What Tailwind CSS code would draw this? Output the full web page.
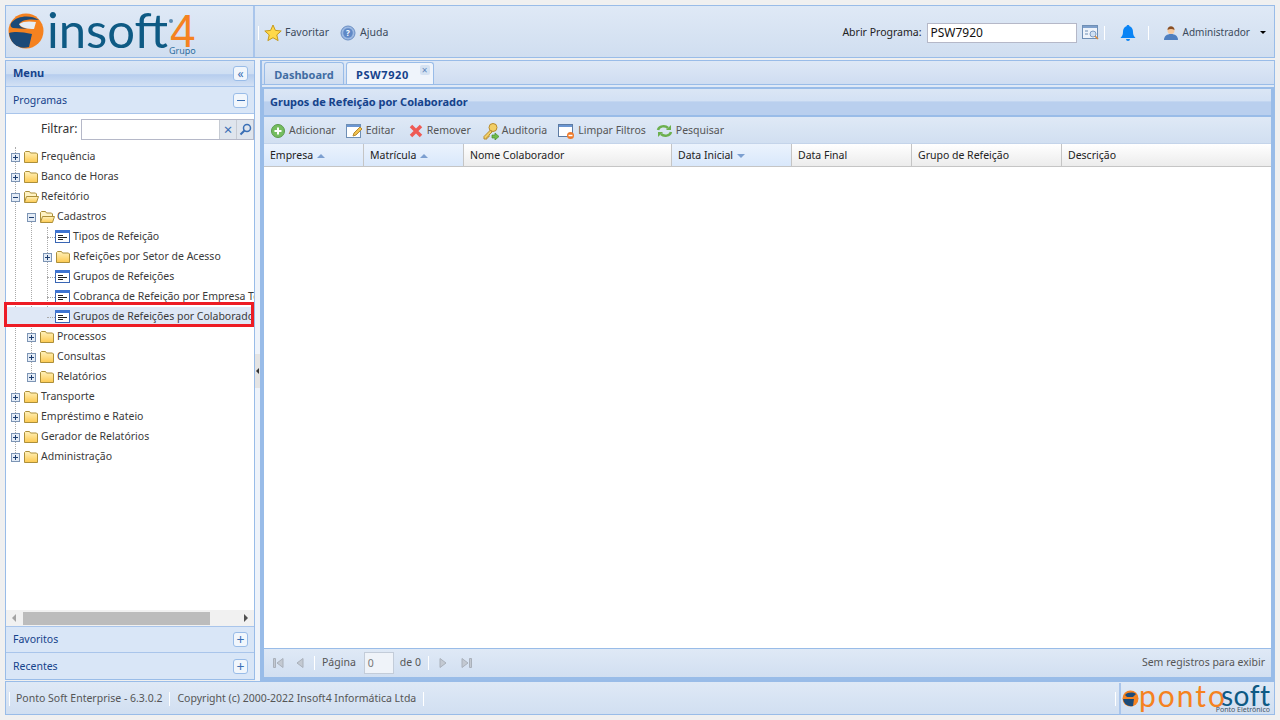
<!DOCTYPE html>
<html lang="en">
<head>
<meta charset="UTF-8">
<title>Insoft4 - PSW7920</title>
<script src="https://cdn.jsdelivr.net/npm/@tailwindcss/browser@4"></script>
</head>
<body class="w-[1280px] h-[720px] overflow-hidden bg-[#f0f0f0] p-[5px] font-['Noto_Sans',sans-serif] text-[10.5px] text-[#333]">

<svg class="absolute w-0 h-0">
  <defs>
    <linearGradient id="fy" x1="0" y1="0" x2="0" y2="1"><stop offset="0" stop-color="#fff2bd"/><stop offset="1" stop-color="#fdc94f"/></linearGradient>
  </defs>
  <symbol id="folder" viewBox="0 0 16 16"><path d="M1.500 13.500v-10l1-1h4l1 1.500h6l1 1v8.500z" fill="url(#fy)" stroke="#ac8f3a"/></symbol>
  <symbol id="folderopen" viewBox="0 0 16 16"><path d="M1.500 13v-9.500l1-1h4l1 1.500h5l1 1v2" fill="#fff3c4" stroke="#ac8f3a"/><path d="M1.500 13.500l2-6h12l-2 6z" fill="url(#fy)" stroke="#ac8f3a"/></symbol>
  <symbol id="leaf" viewBox="0 0 16 16"><rect x=".5" y="1.500" width="14" height="12" fill="#fff" stroke="#3a66b4"/><rect x="0" y="1" width="15" height="3" fill="#3f74d1"/><path d="M3 6.500h5M3 8.500h9M3 10.500h5" stroke="#222"/></symbol>
  <symbol id="plus" viewBox="0 0 9 9"><rect x=".5" y=".5" width="8" height="8" fill="#e4ecf6" stroke="#7d95b5"/><path d="M2 4.500h5M4.500 2v5" stroke="#1f3f70"/></symbol>
  <symbol id="minus" viewBox="0 0 9 9"><rect x=".5" y=".5" width="8" height="8" fill="#e4ecf6" stroke="#7d95b5"/><path d="M2 4.500h5" stroke="#1f3f70"/></symbol>
</svg>

<div class="flex flex-col h-[710px]">
  <!-- cabecalho -->
  <header class="flex shrink-0 h-[53px] border border-[#99bce8] bg-gradient-to-b from-[#dfe9f6] to-[#d0def0]">
    <div class="relative w-[249px] border-r-2 border-[#a9c5eb] overflow-hidden">
      <svg class="absolute left-0 top-[5px]" width="40" height="40" viewBox="0 0 40 40">
        <circle cx="20" cy="20" r="17.500" fill="#f58220"/>
        <path d="M3 22c6-2 14-1 23 1l-3 13c-11 3-19-4-20-14z" fill="#1c4a78"/>
        <path d="M6 11c5-6 18-8 27-2-7-1-16-1-19 3-2 3 2 5 8 6l-15-1c-3-1-3-4-1-6z" fill="#1c4a78"/>
        <path d="M13 13c4-3 11-3 17-2l-2 7c-6 0-13-1-15-5z" fill="#e6edf6"/>
      </svg>
      <span class="absolute left-[41px] top-[3px] font-['Lato',sans-serif] text-[49px] leading-[40px] text-[#0e5a84]">insoft</span>
      <i class="absolute left-[163px] top-[13px] w-[4px] h-[4px] rounded-full bg-[#5b8cb0]"></i>
      <span class="absolute left-[164px] top-[10px] font-['Liberation_Sans',sans-serif] text-[46px] leading-[30px] text-[#f58220]">4</span>
      <span class="absolute left-[163px] top-[39px] text-[9px] leading-[12px] text-[#2d6e9e]">Grupo</span>
    </div>
    <div class="flex-1 flex items-center pl-[3px] pr-[8px] pt-[2px]">
      <i class="w-px h-[14px] bg-white mr-[5px]"></i>
      <svg width="18" height="18" viewBox="0 0 18 18"><path d="M9 1l2.400 5.400 5.800.6-4.400 3.900 1.300 5.700L9 13.700l-5.100 2.900 1.300-5.700L.8 7l5.800-.6z" fill="#ffd94a" stroke="#c69a1c"/></svg>
      <span class="ml-[3px] text-[#3b4a5c]">Favoritar</span>
      <svg class="ml-[11px]" width="16" height="16" viewBox="0 0 16 16"><circle cx="8" cy="8" r="7" fill="#9db9e2" stroke="#6b8fc4"/><circle cx="8" cy="8" r="4.800" fill="#5f88c6"/><text x="8" y="11" font-size="8" font-weight="700" text-anchor="middle" fill="#fff">?</text></svg>
      <span class="ml-[4px] text-[#3b4a5c]">Ajuda</span>
      <span class="ml-auto text-[#222]">Abrir Programa:</span>
      <div class="ml-[5px] w-[150px] h-[20px] border border-[#b5b8c8] bg-white px-[3px] leading-[18px] text-[12px] text-[#111]">PSW7920</div>
      <svg class="ml-[5px]" width="17" height="17" viewBox="0 0 17 17"><rect x=".5" y="1.500" width="15" height="13" fill="#eef3fa" stroke="#6f8fb5"/><rect x="1" y="2" width="14" height="2" fill="#7ea0cc"/><path d="M3 7h3M3 10h3" stroke="#6f8fb5"/><circle cx="11" cy="10" r="3" fill="#cfe0f3" stroke="#7d9cc4"/><path d="M13 12l3 3" stroke="#d98a3c" stroke-width="1.500"/></svg>
      <i class="w-px h-[14px] bg-white ml-[5px]"></i>
      <svg class="ml-[14px]" width="18" height="18" viewBox="0 0 18 18"><path d="M9 1c1 0 1.500.6 1.500 1.300C13 3 14 5.500 14 8c0 3 1 4.500 2.500 6h-15C3 12.500 4 11 4 8c0-2.500 1-5 3.500-5.700C7.500 1.600 8 1 9 1zM7 15h4a2 2 0 0 1-4 0z" fill="#0a84f5"/></svg>
      <i class="w-px h-[14px] bg-white ml-[11px]"></i>
      <svg class="ml-[14px]" width="16" height="16" viewBox="0 0 16 16"><path d="M1 15c0-4 3-6 7-6s7 2 7 6z" fill="#4f7fc0"/><circle cx="8" cy="5.500" r="3.500" fill="#f4c9a0"/><path d="M4.500 5c0-5 7-5 7 0-2-1.500-5-1.500-7 0z" fill="#8a4f24"/></svg>
      <span class="ml-[4px] text-[10px] text-[#3b4a5c]">Administrador</span>
      <i class="ml-[10px] border-x-[3px] border-t-[3px] border-x-transparent border-t-black"></i>
    </div>
  </header>

  <main class="flex flex-1 min-h-0 mt-[2px]">
    <!-- menu lateral -->
    <aside class="flex flex-col w-[250px] mb-px border border-[#99bce8] bg-white">
      <div class="flex items-center justify-between h-[26px] pl-[7px] pr-[6px] border-b border-[#a9c5eb] bg-[linear-gradient(#dbe6f5_0,#cfdff3_50%,#b6cdee_55%,#d3e1f4_100%)] font-bold text-[11px] text-[#15428b]">Menu
        <span class="flex items-center justify-center w-[15px] h-[15px] rounded-[3px] border border-[#99bce8] bg-[#f1f6fc] text-[12px] leading-none font-normal text-[#3a6fb5]">«</span>
      </div>
      <div class="flex items-center justify-between h-[27px] pl-[7px] pr-[6px] pt-px border-b border-[#a9c5eb] bg-[#d9e6f7] text-[#15428b]">Programas
        <span class="flex items-center justify-center w-[15px] h-[15px] rounded-[3px] border border-[#99bce8] bg-[#f1f6fc]"><i class="w-[8px] h-px bg-[#3a6fb5]"></i></span>
      </div>
      <div class="flex items-center shrink-0 h-[30px] pl-[35px] text-[12px] text-[#333]"><span class="w-[40px]">Filtrar:</span>
        <div class="flex w-[173px] h-[21px] border border-[#b5b8c8]">
          <div class="flex-1"></div>
          <span class="flex items-center justify-center w-[17px] border-l border-[#c6cbd3] bg-[#dfe5ed] text-[#3a6fb5] text-[15px] leading-none">×</span>
          <span class="flex items-center justify-center w-[17px] border-l border-[#c6cbd3] bg-[#dfe5ed]"><svg width="13" height="13" viewBox="0 0 13 13" fill="none" stroke="#3a6fb5" stroke-width="1.500"><circle cx="8" cy="5" r="3.500"/><path d="M5.500 7.500L1.500 11.500" stroke-width="2"/></svg></span>
        </div>
      </div>

      <ul class="relative flex-1 whitespace-nowrap pt-[3px] text-[#3a3a3a]">
        <!-- linhas pontilhadas da arvore -->
        <div class="absolute left-[9px] top-[3px] h-[310px] border-l border-dotted border-[#aaa]"></div>
        <div class="absolute left-[25px] top-[73px] h-[160px] border-l border-dotted border-[#aaa]"></div>
        <div class="absolute left-[41px] top-[83px] h-[90px] border-l border-dotted border-[#aaa]"></div>

        <li class="relative flex items-center h-[20px] pl-[5px]"><svg class="shrink-0 w-[9px] h-[9px]"><use href="#plus"/></svg><svg class="shrink-0 ml-[3px] w-[16px] h-[16px]"><use href="#folder"/></svg><span class="ml-[2px]">Frequência</span></li>
        <li class="relative flex items-center h-[20px] pl-[5px]"><svg class="shrink-0 w-[9px] h-[9px]"><use href="#plus"/></svg><svg class="shrink-0 ml-[3px] w-[16px] h-[16px]"><use href="#folder"/></svg><span class="ml-[2px]">Banco de Horas</span></li>
        <li class="relative flex items-center h-[20px] pl-[5px]"><svg class="shrink-0 w-[9px] h-[9px]"><use href="#minus"/></svg><svg class="shrink-0 ml-[3px] w-[16px] h-[16px]"><use href="#folderopen"/></svg><span class="ml-[2px]">Refeitório</span></li>
        <li class="relative flex items-center h-[20px] pl-[21px]"><svg class="shrink-0 w-[9px] h-[9px]"><use href="#minus"/></svg><svg class="shrink-0 ml-[3px] w-[16px] h-[16px]"><use href="#folderopen"/></svg><span class="ml-[2px]">Cadastros</span></li>
        <li class="relative flex items-center h-[20px] pl-[41px]"><i class="shrink-0 w-[8px] border-t border-dotted border-[#aaa]"></i><svg class="shrink-0 w-[16px] h-[16px]"><use href="#leaf"/></svg><span class="ml-[2px]">Tipos de Refeição</span></li>
        <li class="relative flex items-center h-[20px] pl-[37px]"><svg class="shrink-0 w-[9px] h-[9px]"><use href="#plus"/></svg><svg class="shrink-0 ml-[3px] w-[16px] h-[16px]"><use href="#folder"/></svg><span class="ml-[2px]">Refeições por Setor de Acesso</span></li>
        <li class="relative flex items-center h-[20px] pl-[41px]"><i class="shrink-0 w-[8px] border-t border-dotted border-[#aaa]"></i><svg class="shrink-0 w-[16px] h-[16px]"><use href="#leaf"/></svg><span class="ml-[2px]">Grupos de Refeições</span></li>
        <li class="relative flex items-center h-[20px] pl-[41px] overflow-hidden"><i class="shrink-0 w-[8px] border-t border-dotted border-[#aaa]"></i><svg class="shrink-0 w-[16px] h-[16px]"><use href="#leaf"/></svg><span class="ml-[2px]">Cobrança de Refeição por Empresa Terceirizada</span></li>
        <li class="relative flex items-center h-[20px] pl-[41px] overflow-hidden bg-[#dfe8f6]"><i class="shrink-0 w-[8px] border-t border-dotted border-[#aaa]"></i><svg class="shrink-0 w-[16px] h-[16px]"><use href="#leaf"/></svg><span class="ml-[2px]">Grupos de Refeições por Colaborador</span></li>
        <li class="relative flex items-center h-[20px] pl-[21px]"><svg class="shrink-0 w-[9px] h-[9px]"><use href="#plus"/></svg><svg class="shrink-0 ml-[3px] w-[16px] h-[16px]"><use href="#folder"/></svg><span class="ml-[2px]">Processos</span></li>
        <li class="relative flex items-center h-[20px] pl-[21px]"><svg class="shrink-0 w-[9px] h-[9px]"><use href="#plus"/></svg><svg class="shrink-0 ml-[3px] w-[16px] h-[16px]"><use href="#folder"/></svg><span class="ml-[2px]">Consultas</span></li>
        <li class="relative flex items-center h-[20px] pl-[21px]"><svg class="shrink-0 w-[9px] h-[9px]"><use href="#plus"/></svg><svg class="shrink-0 ml-[3px] w-[16px] h-[16px]"><use href="#folder"/></svg><span class="ml-[2px]">Relatórios</span></li>
        <li class="relative flex items-center h-[20px] pl-[5px]"><svg class="shrink-0 w-[9px] h-[9px]"><use href="#plus"/></svg><svg class="shrink-0 ml-[3px] w-[16px] h-[16px]"><use href="#folder"/></svg><span class="ml-[2px]">Transporte</span></li>
        <li class="relative flex items-center h-[20px] pl-[5px]"><svg class="shrink-0 w-[9px] h-[9px]"><use href="#plus"/></svg><svg class="shrink-0 ml-[3px] w-[16px] h-[16px]"><use href="#folder"/></svg><span class="ml-[2px]">Empréstimo e Rateio</span></li>
        <li class="relative flex items-center h-[20px] pl-[5px]"><svg class="shrink-0 w-[9px] h-[9px]"><use href="#plus"/></svg><svg class="shrink-0 ml-[3px] w-[16px] h-[16px]"><use href="#folder"/></svg><span class="ml-[2px]">Gerador de Relatórios</span></li>
        <li class="relative flex items-center h-[20px] pl-[5px]"><svg class="shrink-0 w-[9px] h-[9px]"><use href="#plus"/></svg><svg class="shrink-0 ml-[3px] w-[16px] h-[16px]"><use href="#folder"/></svg><span class="ml-[2px]">Administração</span></li>
        <!-- marca vermelha sobre a linha selecionada -->
        <div class="absolute left-[-2px] top-[158px] w-[250px] h-[25px] border-[3px] border-[#ed1c24]"></div>
      </ul>

      <div class="flex items-center shrink-0 h-[17px] bg-[#f1f1f1] border-b border-[#a9c5eb]">
        <i class="ml-[6px] border-y-[4px] border-r-[4px] border-y-transparent border-r-[#a3a3a3]"></i>
        <div class="ml-[7px] w-[187px] h-[13px] bg-[#bcbcbc]"></div>
        <i class="ml-auto mr-[6px] border-y-[4px] border-l-[4px] border-y-transparent border-l-[#505050]"></i>
      </div>
      <div class="flex items-center justify-between shrink-0 h-[26px] pl-[7px] pr-[6px] border-b border-[#a9c5eb] bg-[#d9e6f7] text-[#15428b]">Favoritos
        <span class="flex items-center justify-center w-[15px] h-[15px] rounded-[3px] border border-[#99bce8] bg-[#f1f6fc] text-[#3a6fb5] text-[14px] leading-none">+</span>
      </div>
      <div class="flex items-center justify-between shrink-0 h-[26px] pl-[7px] pr-[6px] pt-px bg-[#d9e6f7] text-[#15428b]">Recentes
        <span class="flex items-center justify-center w-[15px] h-[15px] rounded-[3px] border border-[#99bce8] bg-[#f1f6fc] text-[#3a6fb5] text-[14px] leading-none">+</span>
      </div>
    </aside>

    <!-- divisor -->
    <div class="flex items-center w-[5px] bg-[#eef3fa]">
      <div class="flex items-center justify-center w-[5px] h-[34px] bg-[#e4e4e4]"><i class="border-y-[3px] border-r-[3px] border-y-transparent border-r-[#333]"></i></div>
    </div>

    <!-- area de trabalho -->
    <section class="flex flex-col flex-1 min-w-0 border border-l-2 border-[#99bce8] bg-[#dfe9f6]">
      <div class="flex items-end shrink-0 h-[24px] pl-[2px] gap-[2px] bg-gradient-to-b from-[#dee8f6] to-[#cfddf1] border-b border-[#99bce8] font-bold text-[11px]">
        <div class="flex items-center justify-center w-[80px] h-[22px] pt-[3px] rounded-t-[3px] border border-b-0 border-[#99bce8] bg-gradient-to-b from-[#dfe9f6] to-[#cfddf0] text-[#416da3]">Dashboard</div>
        <div class="relative flex items-center w-[88px] h-[22px] pl-[9px] pt-[3px] rounded-t-[3px] border border-b-0 border-[#99bce8] bg-[#eff4fb] tracking-[.6px] text-[#15428b]">PSW7920
          <span class="absolute right-[3px] top-[2px] flex items-center justify-center w-[10px] h-[10px] rounded-[2px] bg-[#d5e2f2] text-[10px] leading-none font-normal text-[#5d86bb]">×</span>
        </div>
      </div>
      <div class="flex flex-col flex-1 min-h-0 mt-[2px] border-x-[3px] border-l-[2px] border-t-[2px] border-b-[3px] border-[#99bce8]">
        <div class="flex items-center shrink-0 h-[28px] pl-[6px] pt-[1px] border-b-[2px] border-[#99bce8] bg-[linear-gradient(#dbe6f5_0,#d3e1f4_45%,#b9cfee_50%,#b9cfee_100%)] font-bold text-[11px] text-[#15428b]">Grupos de Refeição por Colaborador</div>
        <div class="flex items-center shrink-0 h-[27px] pl-[6px] pt-px border-b border-[#c4d4ea] bg-gradient-to-b from-[#dfe9f6] to-[#d1dff1] text-[#555]">
          <svg class="shrink-0" width="16" height="16" viewBox="0 0 16 16"><circle cx="8" cy="8" r="6.500" fill="#74bd5f" stroke="#5a9a4c"/><path d="M8 4.500v7M4.500 8h7" stroke="#fff" stroke-width="2"/></svg>
          <span class="ml-[3px]">Adicionar</span>
          <svg class="ml-[10px]" width="18" height="16" viewBox="0 0 18 16"><rect x=".5" y="1.500" width="14" height="13" fill="#fff" stroke="#6f8fb5"/><rect x="1" y="2" width="13" height="2" fill="#6b96d2"/><path d="M7 13l1-3 6-6 2 2-6 6z" fill="#f2c14e" stroke="#b78b2e"/></svg>
          <span class="ml-[2px]">Editar</span>
          <svg class="ml-[13px]" width="16" height="16" viewBox="0 0 16 16"><path d="M3 3l10 10M13 3L3 13" stroke="#ee5a54" stroke-width="3.500"/></svg>
          <span class="ml-[3px]">Remover</span>
          <svg class="ml-[11px]" width="18" height="18" viewBox="0 0 18 18"><circle cx="11" cy="5.500" r="4" fill="#f2cf67" stroke="#b78b2e"/><path d="M8.500 8L2 14.500V17h3v-2h2v-2l3-3z" fill="#f2cf67" stroke="#b78b2e"/><path d="M10 13h3v-2l4 3.500-4 3.500v-2h-3z" fill="#6ebc4b" stroke="#4b8c31" stroke-width=".7"/></svg>
          <span class="ml-[2px]">Auditoria</span>
          <svg class="ml-[10px]" width="18" height="18" viewBox="0 0 18 18"><rect x="1.500" y="2.500" width="14" height="12" fill="#fff" stroke="#5d7ba3"/><rect x="2" y="3" width="13" height="2" fill="#6b96d2"/><circle cx="13.500" cy="13.500" r="3.500" fill="#ef7a2a"/><path d="M11.500 13.500h4" stroke="#fff" stroke-width="1.500"/></svg>
          <span class="ml-[3px]">Limpar Filtros</span>
          <svg class="ml-[10px]" width="17" height="16" viewBox="0 0 17 16" fill="none" stroke="#6cb04e" stroke-width="2.500"><path d="M2 7c1-4 7-5 10-2"/><path d="M15 9c-1 4-7 5-10 2"/><path d="M10 7h5V2z" fill="#6cb04e" stroke="none"/><path d="M7 9H2v5z" fill="#6cb04e" stroke="none"/></svg>
          <span class="ml-[3px]">Pesquisar</span>
        </div>
        <div class="flex shrink-0 h-[23px] border-b border-[#c5c5c5] text-[#222]">
          <div class="flex items-center w-[100px] pl-[6px] pt-px border-r border-[#c5c5c5] bg-gradient-to-b from-[#ebf3fd] to-[#d9e8fb]">Empresa<i class="ml-[4px] border-x-[4px] border-b-[4px] border-x-transparent border-b-[#7c9fd0]"></i></div>
          <div class="flex items-center w-[100px] pl-[6px] pt-px border-r border-[#c5c5c5] bg-gradient-to-b from-[#ebf3fd] to-[#d9e8fb]">Matrícula<i class="ml-[4px] border-x-[4px] border-b-[4px] border-x-transparent border-b-[#7c9fd0]"></i></div>
          <div class="flex items-center w-[208px] pl-[6px] pt-px border-r border-[#c5c5c5] bg-gradient-to-b from-white to-[#ececec]">Nome Colaborador</div>
          <div class="flex items-center w-[120px] pl-[6px] pt-px border-r border-[#c5c5c5] bg-gradient-to-b from-[#ebf3fd] to-[#d9e8fb]">Data Inicial<i class="ml-[4px] border-x-[4px] border-t-[4px] border-x-transparent border-t-[#7c9fd0]"></i></div>
          <div class="flex items-center w-[120px] pl-[6px] pt-px border-r border-[#c5c5c5] bg-gradient-to-b from-white to-[#ececec]">Data Final</div>
          <div class="flex items-center w-[150px] pl-[6px] pt-px border-r border-[#c5c5c5] bg-gradient-to-b from-white to-[#ececec]">Grupo de Refeição</div>
          <div class="flex items-center flex-1 pl-[6px] pt-px bg-gradient-to-b from-white to-[#ececec]">Descrição</div>
        </div>
        <div class="flex-1 bg-white"></div>
        <div class="flex items-center shrink-0 h-[29px] pl-[8px] pr-[6px] border-t border-[#99bce8] bg-gradient-to-b from-[#dfe9f6] to-[#d1dff1] text-[#555]">
          <svg width="12" height="12" viewBox="0 0 12 12" fill="#c3c9d2" stroke="#a9b0ba"><path d="M1.500 1.500h2v9h-2zM11 1.500v9L5 6z"/></svg>
          <svg class="ml-[11px]" width="10" height="12" viewBox="0 0 10 12" fill="#c3c9d2" stroke="#a9b0ba"><path d="M8 1.500v9L2 6z"/></svg>
          <i class="ml-[9px] w-px h-[14px] bg-white"></i>
          <span class="ml-[7px]">Página</span>
          <div class="ml-[8px] w-[30px] h-[22px] px-[3px] border border-[#c3ccd9] bg-[#eff3f9] leading-[20px] text-[#777]">0</div>
          <span class="ml-[6px]">de 0</span>
          <i class="ml-[7px] w-px h-[14px] bg-white"></i>
          <svg class="ml-[9px]" width="10" height="12" viewBox="0 0 10 12" fill="#c3c9d2" stroke="#a9b0ba"><path d="M2 1.500v9L8 6z"/></svg>
          <svg class="ml-[13px]" width="12" height="12" viewBox="0 0 12 12" fill="#c3c9d2" stroke="#a9b0ba"><path d="M8.500 1.500h2v9h-2zM1 1.500v9L7 6z"/></svg>
          <span class="ml-auto">Sem registros para exibir</span>
        </div>
      </div>
    </section>
  </main>

  <!-- rodape -->
  <footer class="flex items-center shrink-0 h-[34px] pt-px border border-[#99bce8] bg-gradient-to-b from-[#dfe9f6] to-[#d1dff1] text-[#555]">
    <i class="ml-[3px] w-px h-[14px] bg-white"></i>
    <span class="ml-[6px]">Ponto Soft Enterprise - 6.3.0.2</span>
    <i class="ml-[7px] w-px h-[14px] bg-white"></i>
    <span class="ml-[7px]">Copyright (c) 2000-2022 Insoft4 Informática Ltda</span>
    <i class="ml-[7px] w-px h-[14px] bg-white"></i>
    <i class="ml-auto mr-[3px] w-px h-[14px] bg-white"></i>
    <div class="relative w-[155px] h-full border-l-2 border-[#a9c5eb] overflow-hidden">
      <svg class="absolute left-[1px] top-[7px]" width="17" height="17" viewBox="0 0 17 17"><circle cx="8.500" cy="8.500" r="8" fill="#f58220"/><path d="M1 9h11l-1 7c-5 1-9-2-10-7z" fill="#1c4a78"/><path d="M3 5c3-3 8-3 11-1l-3 3H5z" fill="#1c4a78"/></svg>
      <span class="absolute left-[18px] top-[-4px] font-['Lato',sans-serif] text-[30px] leading-[32px] tracking-[2px] text-[#f58220]">ponto</span>
      <span class="absolute left-[100px] top-0 font-['Lato',sans-serif] text-[28px] leading-[24px] tracking-[.5px] text-[#0e5a84]">soft</span>
      <span class="absolute right-[4px] bottom-0 text-[7px] leading-[9px] text-[#456]">Ponto Eletrônico</span>
    </div>
  </footer>
</div>
</body>
</html>
